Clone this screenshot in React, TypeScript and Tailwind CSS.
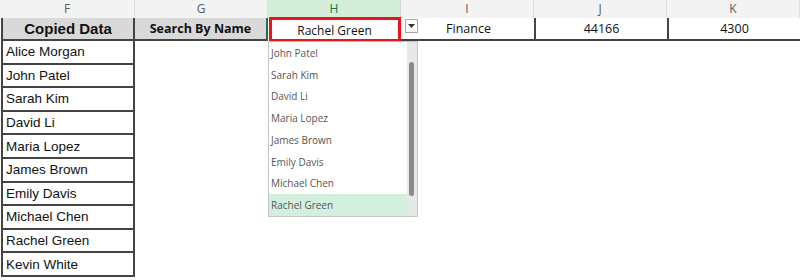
import React from "react";

const names = [
  "Alice Morgan",
  "John Patel",
  "Sarah Kim",
  "David Li",
  "Maria Lopez",
  "James Brown",
  "Emily Davis",
  "Michael Chen",
  "Rachel Green",
  "Kevin White",
];

const listItems = names.slice(1, 9);

const cols = ["F", "G", "H", "I", "J", "K"];

export default function App() {
  return (
    <div className="relative w-[800px] h-[280px] overflow-hidden bg-white">
      <div className="grid grid-cols-[135px_133px_133px_133px_133px_133px] grid-rows-[18px_23px_repeat(10,23.6px)]">
        {/* column header row */}
        {cols.map((c) => (
          <div
            key={c}
            className={
              c === "H"
                ? "flex items-center justify-center border-r border-[#d6d6d6] bg-[#d3eedb] text-[12px] text-[#107c41] [font-family:'Open_Sans',sans-serif]"
                : "flex items-center justify-center border-r border-[#dcdcdc] bg-[#f3f3f3] text-[12px] text-[#5a5a5a] [font-family:'Open_Sans',sans-serif]"
            }
          >
            {c}
          </div>
        ))}

        {/* row 1 */}
        <div className="ml-[1px] flex items-center justify-center border-x-2 border-b-2 border-[#444] bg-[#d9d9d9] pt-[1px] text-[15px] font-bold text-[#111] [font-family:'Liberation_Sans',Arial,sans-serif]">
          Copied Data
        </div>
        <div className="flex items-center justify-center border-b-2 border-r-2 border-b-[#444] border-r-[#1e7145] bg-[#d9d9d9] pt-[2px] text-[12.5px] font-bold text-[#111] [font-family:'Open_Sans',sans-serif]">
          Search By Name
        </div>
        <div className="relative flex items-center justify-center bg-white pt-[3px] text-[12px] text-[#111] [font-family:'Open_Sans',sans-serif]">
          Rachel Green
          <div className="absolute left-[1px] top-[-1px] h-[25px] w-[132px] border-[3px] border-[#e8141a]" />
        </div>
        <div className="flex items-center justify-center border-b-2 border-[#444] bg-white pl-[2px] pt-[2px] text-[12.5px] text-[#111] [font-family:'Open_Sans',sans-serif]">
          Finance
        </div>
        <div className="flex items-center justify-center border-b-2 border-l-2 border-[#444] bg-white pt-[2px] text-[12.5px] text-[#111] [font-family:'Open_Sans',sans-serif]">
          44166
        </div>
        <div className="flex items-center justify-center border-b-2 border-l-2 border-[#444] bg-white pt-[2px] text-[12.5px] text-[#111] [font-family:'Open_Sans',sans-serif]">
          4300
        </div>

        {/* data rows */}
        {names.map((n) => (
          <React.Fragment key={n}>
            <div className="ml-[1px] flex items-center border-x-2 border-b-2 border-[#444] bg-white pl-[3px] pt-[1px] text-[13.5px] text-[#111] [font-family:'Liberation_Sans',Arial,sans-serif]">
              {n}
            </div>
            <div />
            <div />
            <div />
            <div />
            <div />
          </React.Fragment>
        ))}
      </div>

      {/* dropdown arrow button */}
      <div className="absolute left-[405px] top-[19px] flex h-[14px] w-[13px] items-center justify-center border border-[#a6a6a6] bg-white">
        <svg width="7" height="4" viewBox="0 0 7 4">
          <path d="M0 0 L7 0 L3.5 4 Z" fill="#333" />
        </svg>
      </div>

      {/* dropdown list */}
      <div className="absolute left-[268px] top-[41px] flex h-[176px] w-[150px] border border-[#c4c4c4] bg-white">
        <div className="flex flex-1 flex-col">
          {listItems.map((n, i) => (
            <div
              key={n}
              className={
                (i === listItems.length - 1 ? "bg-[#d3f0df] " : "") +
                "flex flex-1 items-center pl-[2px] pt-[1px] text-[10px] text-[#555] [font-family:'Open_Sans',sans-serif]"
              }
            >
              {n}
            </div>
          ))}
        </div>
        <div className="relative w-[10px] bg-[#e8e8e8]">
          <div className="absolute left-[2px] top-[20px] h-[134px] w-[5px] rounded-full bg-[#8a8a8a]" />
        </div>
      </div>
    </div>
  );
}
